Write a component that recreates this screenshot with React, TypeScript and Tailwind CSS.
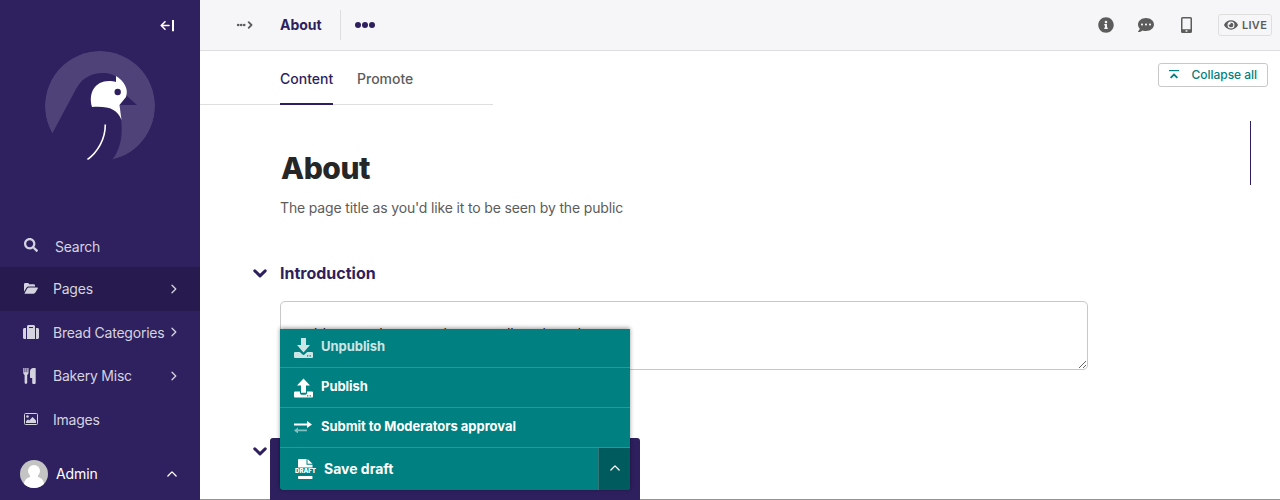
import React from 'react';
import { FaSearch, FaSuitcase, FaInfoCircle, FaCommentDots, FaEye } from 'react-icons/fa';

const stroke = { fill: 'none', stroke: 'currentColor', strokeLinecap: 'round', strokeLinejoin: 'round' } as const;

function Bird() {
  return (
    <svg viewBox="0 0 110 110" className="size-[110px]">
      <defs>
        <clipPath id="disc"><circle cx="55" cy="55" r="55" /></clipPath>
      </defs>
      <g clipPath="url(#disc)">
        <circle cx="55" cy="55" r="55" fill="#4f4278" />
        <path d="M7.500 82 31 38C37 27 46 22 58 22c15 0 22 10 24 23l10 9H74.500l1.800 16c1.500 16-1 29-10 40l-12 8L20 110Z" fill="#2f215f" />
        <path d="M7.500 82C18 99 35 110 55 110l11-1" fill="none" stroke="#2f215f" strokeWidth="2" />
        <path d="M47 56c-4-14 3-26 17-26 2 0 5 0 7 1v-6c8 5 13 13 10 21l-6.500 8 2 15C72 58 64 55 47 56Z" fill="#fff" />
        <circle cx="72.700" cy="41" r="3.200" fill="#2f215f" />
        <path d="M60.300 73.500C60.300 88 53 101 42 109" fill="none" stroke="#fff" strokeWidth="1.600" />
      </g>
    </svg>
  );
}

function Chevron({ className }: { className: string }) {
  return (
    <svg viewBox="0 0 10 10" className={className} {...stroke} strokeWidth="1.300"><path d="m3 1.200 3.800 3.800L3 8.800" /></svg>
  );
}

function CaretUp() {
  return <svg viewBox="0 0 10 6" className="h-[6px] w-[10px]" {...stroke} strokeWidth="1.300"><path d="M.9 5 5 .9 9.100 5" /></svg>;
}

function SectionToggle() {
  return <svg viewBox="0 0 14 9" className="ml-[1px] h-[9px] w-[14px] text-[#2e1f5e]" {...stroke} strokeWidth="3"><path d="m1.800 1.800 5.200 5 5.200-5" /></svg>;
}

function FolderIcon() {
  return (
    <svg viewBox="0 0 14 11" className="h-[11px] w-[14px]" fill="currentColor">
      <path d="M0 8.800V1.300C0 .6.600 0 1.300 0h2.500c.7 0 1.200.6 1.200 1.300h4.800c.7 0 1.200.6 1.200 1.300v.9H5c-1 0-2 .5-2.600 1.300Z" />
      <path d="M.6 10.300 3.200 5.600c.4-.7 1.100-1.100 1.800-1.100h8.300c.6 0 .8.500.5.900l-2.400 4.200c-.4.700-1.100 1.100-1.800 1.100H1c-.4 0-.5-.2-.4-.4Z" />
    </svg>
  );
}

function CutleryIcon() {
  return (
    <svg viewBox="0 0 13 16" className="mr-[4px] h-4 w-[13px]" fill="currentColor">
      <path d="M.3 0h1.200v4.300h.8V0h1.200v4.300h.8V0h1.200v4.800c0 1.100-.5 1.800-1.300 2.200v7.600c0 .8-.6 1.400-1.300 1.400s-1.300-.6-1.300-1.400V7C.8 6.600.3 5.900.3 4.800Z" />
      <path d="M12.700.5v14.200c0 .7-.6 1.300-1.300 1.300h-.9c-.7 0-1.300-.6-1.300-1.300V10H7.500c-.3 0-.5-.2-.5-.5V3.400C7 1.500 8.500 0 10.300 0h1.900c.3 0 .5.200.5.500Z" />
    </svg>
  );
}

function ImageIcon() {
  return (
    <svg viewBox="0 0 14 12" className="h-[12px] w-[14px]" fill="currentColor">
      <rect x=".5" y=".5" width="13" height="11" rx="1" fill="none" stroke="currentColor" />
      <circle cx="3.500" cy="3.500" r="1.300" />
      <path d="M2 10V8.200l2-2 1.200 1.200L8.600 4 12 7.400V10Z" />
    </svg>
  );
}

function TrayIcon({ up }: { up?: boolean }) {
  return (
    <svg viewBox="0 0 19 20" className="h-[20px] w-[19px]" fill="currentColor">
      <path fillRule="evenodd" d={up
        ? "M1 13.500h5v1.500c0 1 .7 1.700 1.700 1.700h3.600c1 0 1.700-.7 1.700-1.700v-1.500h5a1 1 0 0 1 1 1V18.500a1 1 0 0 1-1 1H1a1 1 0 0 1-1-1v-4a1 1 0 0 1 1-1Zm12 3.700v1.300h1.300v-1.300Zm2.600 0v1.300h1.300v-1.300Z"
        : "M1 14h4.800l2.400 2.300c.8.800 1.800.800 2.600 0l2.400-2.300H18a1 1 0 0 1 1 1v4a1 1 0 0 1-1 1H1a1 1 0 0 1-1-1v-4a1 1 0 0 1 1-1Zm12 3.200v1.300h1.300v-1.300Zm2.600 0v1.300h1.300v-1.300Z"} />
      {up ? <path d="M7 14.800V7.500H3L9.500.5 16 7.500h-4v7.300Z" /> : <path d="M7 0h5v7h4l-6.500 7.500L3 7h4Z" />}
    </svg>
  );
}

function SwapIcon() {
  return (
    <svg viewBox="0 0 19 12" className="mb-[2px] h-[12px] w-[19px]" fill="currentColor">
      <path d="M0 2.500h13V0l5 3.500L13 7V4.500H0Z" />
      <path opacity=".5" d="M13 8.600H4V6.500L0 9.500l4 3v-2.200h9Z" />
    </svg>
  );
}

function DraftIcon() {
  return (
    <svg viewBox="0 0 22 20" className="h-[20px] w-[22px]" fill="currentColor">
      <path d="M3 1a1 1 0 0 1 1-1h7.500v5.700h6V8.500H3Z" />
      <path d="m12.500 0 5 4.700h-5Z" />
      <text x="0" y="14.200" fontSize="5.600" fontWeight="900" textLength="21" lengthAdjust="spacingAndGlyphs" fontFamily="Inter, sans-serif">DRAFT</text>
      <rect x="3" y="17" width="14.500" height="3" rx=".8" />
    </svg>
  );
}

function NavItem({ icon, label, active, arrow }: { icon: React.ReactNode; label: string; active?: boolean; arrow?: boolean }) {
  return (
    <a className={`flex h-[43.500px] items-center pl-[22px] ${active ? 'bg-[#261a4e]' : ''}`}>
      <span className="flex w-[18px] justify-center">{icon}</span>
      <span className="ml-[13px] w-[116px] pt-[1px] tracking-[-0.22px] whitespace-nowrap">{label}</span>
      {arrow && <Chevron className="size-[10px]" />}
    </a>
  );
}

function MenuItem({ icon, label, faded }: { icon: React.ReactNode; label: string; faded?: boolean }) {
  return (
    <div className="flex h-10 items-center border-b border-[#2f9696] pl-[14px] text-[13px] font-bold">
      <span className={`flex items-center ${faded ? 'opacity-80' : ''}`}>
        <span className="w-[19px]">{icon}</span>
        <span className="ml-2 pb-[2px] tracking-[-0.04px]">{label}</span>
      </span>
    </div>
  );
}

export default function App() {
  return (
    <div className="relative flex h-[500px] w-[1280px] overflow-hidden bg-white font-['Inter',sans-serif] text-sm text-[#5c5c5c]">
      <aside className="flex h-[500px] w-[200px] shrink-0 flex-col bg-[#2f215f] text-[#d5d3df]">
        <div className="flex h-[51px] justify-end pt-[19px] pr-[26px] text-white">
          <svg viewBox="0 0 14 13" className="h-[13px] w-[14px]" {...stroke} strokeWidth="1.600"><path d="M9 6.500H1.200M5 2.700 1.200 6.500 5 10.300" /><path d="M13 1v11.200" strokeWidth="2" strokeLinecap="butt" /></svg>
        </div>
        <div className="flex justify-center"><Bird /></div>
        <div className="mt-[64px] flex h-[42px] items-center pl-6">
          <FaSearch className="mb-[3px] size-[14px]" />
          <span className="ml-[17px] pt-[2px] tracking-[-0.22px]">Search</span>
        </div>
        <nav>
          <NavItem icon={<FolderIcon />} label="Pages" active arrow />
          <NavItem icon={<FaSuitcase className="size-4" />} label="Bread Categories" arrow />
          <NavItem icon={<CutleryIcon />} label="Bakery Misc" arrow />
          <NavItem icon={<ImageIcon />} label="Images" />
        </nav>
        <div className="mt-[12px] flex h-[42px] items-center pl-5 text-white">
          <svg viewBox="0 0 28 28" className="size-7"><defs><clipPath id="face"><circle cx="14" cy="14" r="14" /></clipPath></defs><g clipPath="url(#face)"><rect width="28" height="28" fill="#c4c4c4" /><circle cx="14" cy="11" r="6" fill="#fff" /><path d="M10 14h8v3c4 1 6.500 4 6.500 11h-21c0-7 2.500-10 6.500-11Z" fill="#fff" /></g></svg>
          <span className="ml-2 w-[111px] tracking-[-0.1px]">Admin</span>
          <CaretUp />
        </div>
      </aside>

      <div className="flex min-w-0 flex-1 flex-col">
        <header className="flex h-[51px] items-center border-b border-[#dedede] bg-[#f6f6f8]">
          <svg viewBox="0 0 17 8" className="ml-9 h-[8px] w-[17px]" fill="currentColor"><circle cx="2.200" cy="4" r="1.350" /><circle cx="5.200" cy="4" r="1.350" /><circle cx="8.200" cy="4" r="1.350" /><path d="m12.700 1.200 2.800 2.800-2.800 2.800" {...stroke} strokeWidth="1.800" /></svg>
          <span className="ml-[27px] w-[60px] font-bold text-[#2e1f5e]">About</span>
          <span className="h-[30px] w-px bg-[#dedede]" />
          <svg viewBox="0 0 20 6" className="ml-[14px] h-[6px] w-[20px] text-[#2e1f5e]" fill="currentColor"><circle cx="3" cy="3" r="3" /><circle cx="10" cy="3" r="3" /><circle cx="17" cy="3" r="3" /></svg>
          <div className="ml-auto flex items-center pr-2">
            <FaInfoCircle className="size-4" />
            <FaCommentDots className="ml-6 size-4" />
            <svg viewBox="0 0 11 16" className="ml-[26.500px] h-4 w-[11px]" fill="currentColor"><path fillRule="evenodd" d="M1.500 0h8A1.500 1.500 0 0 1 11 1.500v13A1.500 1.500 0 0 1 9.500 16h-8A1.500 1.500 0 0 1 0 14.500v-13A1.500 1.500 0 0 1 1.500 0Zm0 1.500v10.800h8V1.500ZM4.600 13.200v1.500h1.800v-1.500Z" /></svg>
            <div className="ml-[26.500px] flex h-[22px] w-[54px] items-center rounded-[3px] border border-[#dedede] pl-[5px] text-[11px] font-semibold tracking-[0.3px]">
              <FaEye className="mr-1 size-[14px] shrink-0" /><span className="pt-px">LIVE</span>
            </div>
          </div>
        </header>

        <div className="flex justify-between pr-3">
          <div className="flex h-[54px] w-[293px] border-b border-[#dedede] pl-20 font-medium">
            <span className="box-border h-[54px] w-[53px] border-b-2 border-[#2e1f5e] pt-[18px] text-[#2e1f5e]">Content</span>
            <span className="ml-6 pt-[18px]">Promote</span>
          </div>
          <div className="mt-3 flex h-6 w-[110px] items-center rounded-[3px] border border-[#c8c8c8] pl-[10px] text-xs font-medium text-[#008080]">
            <svg viewBox="0 0 10 9" className="mb-[2px] h-[9px] w-[10px]" {...stroke} strokeWidth="1.800"><path d="M0 .6h10" strokeLinecap="butt" strokeWidth="1.200" /><path d="m1.600 7.800 3.400-3.200 3.400 3.200" strokeLinecap="butt" strokeLinejoin="miter" /></svg>
            <span className="ml-[12.500px] tracking-[-0.03px] whitespace-nowrap">Collapse all</span>
          </div>
        </div>

        <main className="flex flex-1 items-start justify-between pr-[29px]">
          <div className="w-[888px] pl-[52px]">
            <h1 className="mt-[44px] ml-[29px] text-[30px] leading-[38px] font-extrabold tracking-[-0.45px] text-[#262626]">About</h1>
            <p className="mt-[11px] ml-7 leading-5 tracking-[-0.15px]">The page title as you'd like it to be seen by the public</p>
            <div className="mt-[43px] flex h-6 items-center">
              <SectionToggle />
              <h2 className="ml-[13px] text-base font-bold text-[#2e1f5e]">Introduction</h2>
            </div>
            <textarea className="mt-4 ml-7 block h-[69px] w-[808px] resize-y rounded-[5px] border border-[#c8c8c8] px-5 pt-5 pb-[21px] leading-6 text-[#262626]" readOnly defaultValue="add source loaves or buns as all are bread" />
            <div className="mt-[77px] flex h-[9px]"><SectionToggle /></div>
          </div>
          <div className="mt-4 h-16 w-px bg-[#2e1f5e]" />
        </main>
        <div className="h-px bg-[#929292]" />
      </div>

      <div className="absolute bottom-0 left-[270px] h-[62px] w-[370px] rounded-t-[3px] bg-[#2e1f5e]" />
      <div className="absolute top-[329px] left-[280px] w-[350px] rounded-b-[3px] bg-[#008080] text-white shadow-[0_-1px_4px_rgba(0,0,0,0.4)]">
        <div className="-mt-px">
          <MenuItem icon={<TrayIcon />} label="Unpublish" faded />
        </div>
        <MenuItem icon={<TrayIcon up />} label="Publish" />
        <MenuItem icon={<SwapIcon />} label="Submit to Moderators approval" />
        <div className="flex h-[42px]">
          <div className="flex flex-1 items-center pl-[15px] font-bold"><DraftIcon /><span className="ml-[7px]">Save draft</span></div>
          <div className="flex w-8 items-center justify-center rounded-br-[3px] border-l border-[#337778] bg-[#005b5e] pb-[2px]"><CaretUp /></div>
        </div>
      </div>
    </div>
  );
}
